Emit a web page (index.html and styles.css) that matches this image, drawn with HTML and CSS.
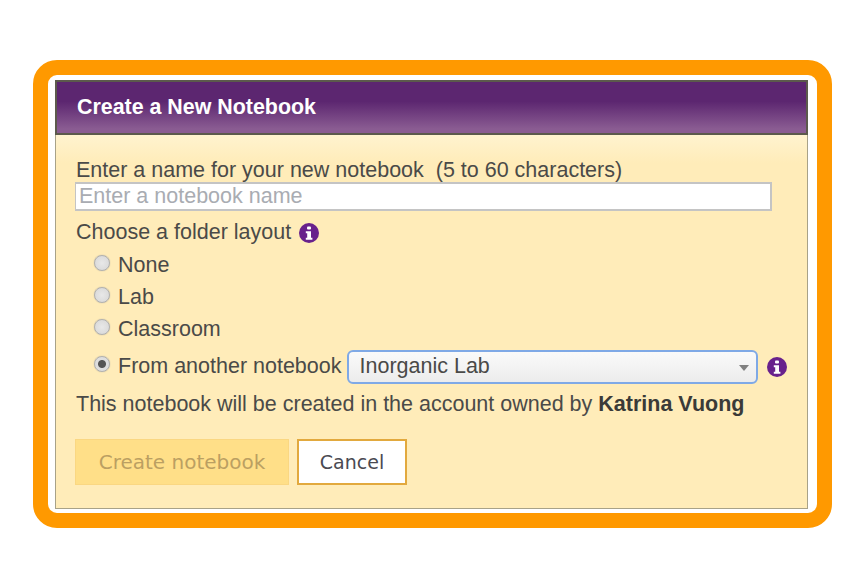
FILE: index.html
```html
<!DOCTYPE html>
<html lang="en">
<head>
  <meta charset="UTF-8" />
  <title>Create a New Notebook</title>
  <link rel="stylesheet" href="styles.css">
</head>
<body>
  <div class="frame">
    <div class="dialog">
      <div class="dialog-title">Create a New Notebook</div>
      <div class="dialog-body">
        <div class="name-label">Enter a name for your new notebook&nbsp; (5 to 60 characters)</div>
        <input class="name-input" type="text" placeholder="Enter a notebook name" />
        <div class="layout-label">
          Choose a folder layout
          <svg class="info" viewBox="0 0 20 20"><circle cx="10" cy="10" r="10" fill="#68218c"/><rect x="8" y="3.4" width="4" height="3.2" rx="1" fill="#fff"/><path d="M6.8 8.2h5.2v6.6h1.4v2H6.8v-2h1.4v-4.6H6.8z" fill="#fff"/></svg>
        </div>
        <div class="radio-row"><span class="radio"></span>None</div>
        <div class="radio-row"><span class="radio"></span>Lab</div>
        <div class="radio-row"><span class="radio"></span>Classroom</div>
        <div class="radio-row from-row">
          <span class="radio checked"></span>From another notebook
          <div class="select">
            <span>Inorganic Lab</span>
            <span class="caret"></span>
          </div>
          <svg class="info" viewBox="0 0 20 20"><circle cx="10" cy="10" r="10" fill="#68218c"/><rect x="8" y="3.4" width="4" height="3.2" rx="1" fill="#fff"/><path d="M6.8 8.2h5.2v6.6h1.4v2H6.8v-2h1.4v-4.6H6.8z" fill="#fff"/></svg>
        </div>
        <div class="owner-line">This notebook will be created in the account owned by <strong>Katrina Vuong</strong></div>
        <div class="actions">
          <button class="btn btn-create" disabled>Create notebook</button>
          <button class="btn btn-cancel">Cancel</button>
        </div>
      </div>
    </div>
  </div>
</body>
</html>
```

FILE: styles.css
```css
html,
body {
  margin: 0;
  padding: 0;
  background: #fff;
}

body {
  font-family: "Liberation Sans", Arial, sans-serif;
  font-size: 21.5px;
  color: #4a4a48;
}

/* orange highlight round the dialog */
.frame {
  box-sizing: border-box;
  width: 799px;
  height: 468px;
  margin: 60px 0 0 33px;
  padding: 5px 9px 4px 7px;
  border: 15px solid #ff9900;
  border-radius: 24px;
  background: #fff;
  background-clip: padding-box;
}

.dialog {
  box-sizing: border-box;
  height: 100%;
  border: 1px solid #a8a288;
  border-top: 0;
  background: #ffecb9;
}

.dialog-title {
  box-sizing: border-box;
  height: 55px;
  margin: 0 -1px;
  padding: 13px 20px 0;
  border: 2px solid #5c5a4c;
  background: linear-gradient(#5c2670 0, #5c2670 38%, #8a5c92 92%);
  color: #fff;
  font-size: 21.4px;
  font-weight: bold;
  line-height: 24px;
}

.dialog-body {
  padding: 23px 20px 0;
  background: linear-gradient(#fff3cf 0, #ffecb9 28px) no-repeat;
}

.name-label {
  line-height: 24px;
}

.name-input {
  display: block;
  box-sizing: border-box;
  width: 697px;
  height: 29px;
  margin: 0 0 0 -1px;
  padding: 0 3px;
  border: 1px solid #c4c4c4;
  border-width: 2px 2px 2px 1px;
  background: #fff;
  font: inherit;
  color: #4a4a48;
}

.name-input::placeholder {
  color: #a9acb2;
  opacity: 1;
}

.layout-label {
  display: flex;
  align-items: center;
  gap: 8px;
  margin-top: 8px;
  line-height: 26px;
}

.info {
  width: 20px;
  height: 20px;
  flex: none;
  margin-top: 2px;
}

.radio-row {
  display: flex;
  align-items: center;
  height: 32px;
  margin-left: 18px;
}

.layout-label + .radio-row {
  margin-top: 4px;
}

.radio {
  box-sizing: border-box;
  width: 16px;
  height: 16px;
  flex: none;
  margin: -4px 8px 0 0;
  border: 1px solid #b0b0b0;
  border-radius: 50%;
  background: radial-gradient(circle, #e8e8e8 0, #d6d6d6 100%);
  box-shadow: 0 0 1px #999;
}

.radio.checked {
  background: radial-gradient(circle, #555 0, #555 3.5px, #dedede 4.5px);
}

.from-row {
  height: 38px;
  margin-top: 2px;
}

.from-row .info {
  margin: 2px 0 0 9px;
}

.select {
  box-sizing: border-box;
  display: flex;
  align-items: center;
  justify-content: space-between;
  width: 411px;
  height: 34px;
  margin: 1px 0 0 5px;
  padding: 0 7px 0 11px;
  border: 2px solid #7fa9e6;
  border-radius: 6px;
  background: linear-gradient(#fafafa 0, #ececec 100%);
}

.caret {
  width: 0;
  height: 0;
  margin-top: 2px;
  border-left: 5px solid transparent;
  border-right: 5px solid transparent;
  border-top: 6px solid #808080;
}

.owner-line {
  margin-top: 6px;
  line-height: 26px;
}

.owner-line strong {
  color: #3a3a38;
}

.actions {
  display: flex;
  gap: 8px;
  margin: 22px 0 0 -1px;
}

.btn {
  box-sizing: border-box;
  height: 46px;
  padding: 0;
  font-family: "DejaVu Sans", Verdana, sans-serif;
  font-size: 19px;
}

.btn-create {
  width: 214px;
  border: 1px solid #fad782;
  background: #ffdf88;
  color: #bb9f62;
  font-size: 20px;
}

.btn-cancel {
  width: 110px;
  border: 2px solid #e2a93e;
  background: #fff;
  color: #4a4a52;
}
```
